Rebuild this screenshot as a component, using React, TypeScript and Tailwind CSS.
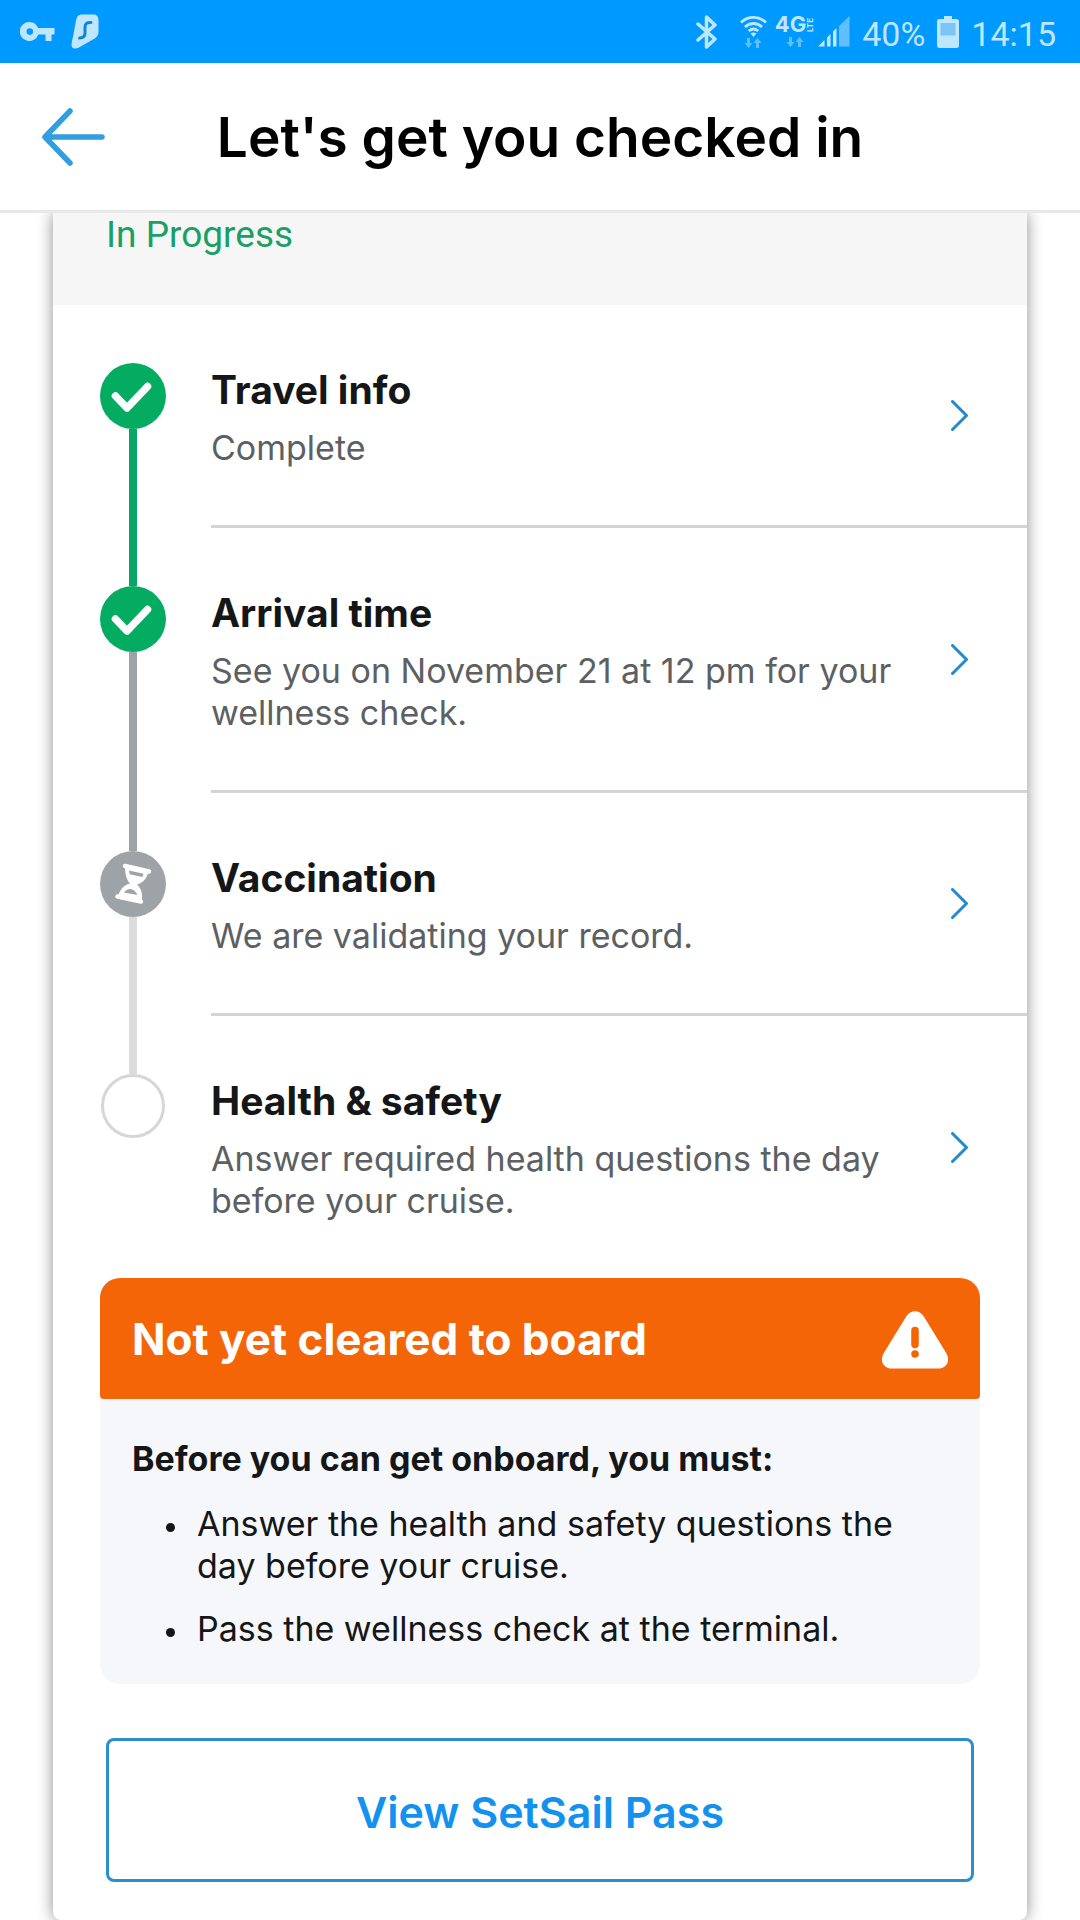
import type { ReactNode } from "react";

type Status = "done" | "pending" | "open";

type Step = {
  title: string;
  detail: string;
  status: Status;
  lineAbove: string;
  lineBelow: string;
};

const steps: Step[] = [
  {
    title: "Travel info",
    detail: "Complete",
    status: "done",
    lineAbove: "bg-transparent",
    lineBelow: "bg-[#08a666]",
  },
  {
    title: "Arrival time",
    detail: "See you on November 21 at 12 pm for your wellness check.",
    status: "done",
    lineAbove: "bg-[#08a666]",
    lineBelow: "bg-[#9ea3a8]",
  },
  {
    title: "Vaccination",
    detail: "We are validating your record.",
    status: "pending",
    lineAbove: "bg-[#9ea3a8]",
    lineBelow: "bg-[#dcdcdc]",
  },
  {
    title: "Health & safety",
    detail: "Answer required health questions the day before your cruise.",
    status: "open",
    lineAbove: "bg-[#dcdcdc]",
    lineBelow: "bg-transparent",
  },
];

const requirements = [
  "Answer the health and safety questions the day before your cruise.",
  "Pass the wellness check at the terminal.",
];

function DataArrows() {
  return (
    <svg width="18" height="10" viewBox="0 0 18 10" fill="currentColor" className="opacity-50" aria-hidden="true">
      <path d="M3 0h3v5h2.500L4.500 10 .5 5H3zM12 10h3V5h2.500L13.500 0 9.500 5H12z" />
    </svg>
  );
}

function StatusBar() {
  return (
    <div className="flex h-[63px] items-center justify-between bg-[#0099ff] pr-6 pl-5 text-[#bfe6ff]">
      <div className="flex items-center gap-4">
        <svg width="35" height="20" viewBox="0 0 35 20" aria-label="VPN key">
          <path
            fill="currentColor"
            fillRule="evenodd"
            d="M9.500 0a9.500 9.500 0 0 1 8.600 6H34.500v6.500H31.500V19H25.500v-6.500H18.300A9.500 9.500 0 1 1 9.500 0zm.3 6.300a3.300 3.300 0 1 0 0 6.600 3.300 3.300 0 0 0 0-6.600z"
          />
        </svg>
        <svg width="28" height="35" viewBox="0 0 28 35" aria-label="Surfshark">
          <path
            fill="currentColor"
            d="M11 .5h11c3.500 0 5.500 2 5.500 5.500v11.500c0 3-1.200 5.200-3.800 6.900L7.500 33.800C4 35.500.5 34.500.5 31c0-2 .8-5.500 1.700-9L5 6.500C5.800 2.500 7.500.5 11 .5z"
          />
          <path
            fill="none"
            stroke="#0c86d8"
            strokeWidth="3"
            strokeLinecap="round"
            d="M20 8.500c-4-.3-6 1.200-6 4.500v6c0 3.300-1.500 5-5.500 5"
          />
        </svg>
      </div>
      <div className="flex items-center gap-3">
        <div className="flex items-center">
          <svg width="22" height="34" viewBox="0 0 22 34" className="mr-[22px]" aria-label="Bluetooth">
            <path
              d="M2 9l17 15-8.500 8V2L19 10 2 25"
              fill="none"
              stroke="currentColor"
              strokeWidth="3.500"
              strokeLinejoin="round"
              strokeLinecap="round"
            />
          </svg>
          <div className="mr-2 flex flex-col items-center gap-px">
            <svg width="27" height="21" viewBox="0 0 27 21" aria-label="Wi-Fi">
              <g fill="none" stroke="currentColor" strokeWidth="2.800">
                <path d="M1 6.500C8-.3 19-.3 26 6.500" />
                <path d="M5 11c5-4.700 12-4.700 17 0" />
                <path d="M8.800 15c3-2.600 6.400-2.600 9.400 0" />
              </g>
              <path d="M10.500 17.500q3-2 6 0l-3 3.500z" fill="currentColor" />
            </svg>
            <DataArrows />
          </div>
          <div className="mr-1 flex flex-col items-center gap-1">
            <div className="flex h-[17px] items-center">
              <span className="font-[Inter,sans-serif] text-[22px] leading-[17px] font-bold">4G</span>
              <span className="rotate-180 font-[Inter,sans-serif] text-[8px] leading-[8px] font-bold [writing-mode:vertical-rl]">
                LTE
              </span>
            </div>
            <DataArrows />
          </div>
          <svg width="32" height="31" viewBox="0 0 32 31" aria-label="Signal strength">
            <g fill="currentColor">
              <path d="M0 30.500L6.500 24v6.500zM9 21.500l3.500-3.500v12.500H9zM15 15.500l3.500-3.500v18.500H15z" />
              <path d="M21 10L31.500 0v30.500H21z" opacity=".5" />
            </g>
          </svg>
        </div>
        <span className="pt-1 font-[Roboto,sans-serif] text-[34px] leading-none">40%</span>
        <svg width="22" height="32" viewBox="0 0 22 32" aria-label="Battery">
          <path
            fill="currentColor"
            d="M7 0h8v3h4.500Q22 3 22 5.500v24Q22 32 19.500 32h-17Q0 32 0 29.500v-24Q0 3 2.500 3H7z"
          />
          <path fill="#7cc4f5" d="M3.500 7h15v12.500h-15z" />
        </svg>
        <time className="pt-1 font-[Roboto,sans-serif] text-[34px] leading-none">14:15</time>
      </div>
    </div>
  );
}

function StepMarker({ status }: { status: Status }) {
  if (status === "open") {
    return <div className="mx-px size-16 shrink-0 rounded-full border-[3px] border-[#d6d6d6] bg-white" />;
  }
  if (status === "pending") {
    return (
      <svg width="66" height="66" viewBox="0 0 66 66" className="shrink-0" aria-label="In review">
        <circle cx="33" cy="33" r="33" fill="#9ea3a8" />
        <g fill="none" stroke="#fff" strokeWidth="4.500" strokeLinecap="round" strokeLinejoin="round">
          <path d="M25 15l24 5.500M17.500 45.500L41 50.500" />
        </g>
        <path
          fill="#fff"
          fillRule="evenodd"
          d="M25 15c0 8 1.500 13.500 5 17.500C23 34.500 19.500 39 18 46l23.500 4.500c1.500-6.500 0-13-4.500-17C43 32 47 27.500 48.500 20.500zM28.800 19.500L43.500 22.800l-1 3.200L29.800 23.200zM24 41.500c4-5.500 10.500-4.500 13.500 2.500z"
        />
      </svg>
    );
  }
  return (
    <svg width="66" height="66" viewBox="0 0 66 66" className="shrink-0" aria-label="Complete">
      <circle cx="33" cy="33" r="33" fill="#04ac62" />
      <path
        d="M15.500 33L27 45 47.500 23.500"
        fill="none"
        stroke="#fff"
        strokeWidth="7.500"
        strokeLinecap="round"
        strokeLinejoin="round"
      />
    </svg>
  );
}

function StepRow({ step, last }: { step: Step; last: boolean }) {
  return (
    <li>
      <a href="#" className="flex gap-[45px] pl-[47px]">
        <div className="flex flex-col items-center">
          <div className={`h-[58px] w-2 ${step.lineAbove}`} />
          <StepMarker status={step.status} />
          <div className={`w-2 flex-1 ${step.lineBelow}`} />
        </div>
        <div
          className={`flex flex-1 items-center gap-10 pr-[59px] ${last ? "" : "border-b-[3px] border-[#d4d4d4]"}`}
        >
          <div className="flex-1 pt-[61px] pb-14">
            <h2 className="text-[39px] leading-[48px] font-bold text-[#141617]">{step.title}</h2>
            <p className="mt-[13px] text-[34px] leading-[42px] text-[#5c6063]">{step.detail}</p>
          </div>
          <svg width="17" height="31" viewBox="0 0 17 31" className="shrink-0" aria-hidden="true">
            <path
              d="M1.500 1.500l14 14-14 14"
              fill="none"
              stroke="#1f8bd0"
              strokeWidth="3"
              strokeLinecap="round"
              strokeLinejoin="round"
            />
          </svg>
        </div>
      </a>
    </li>
  );
}

function Bullet({ children }: { children: ReactNode }) {
  return (
    <li className="flex gap-[22px] pl-[34px]">
      <span className="mt-5 size-[9px] shrink-0 rounded-full bg-[#141617]" />
      <span>{children}</span>
    </li>
  );
}

function BoardingNotice() {
  return (
    <section className="mx-[47px] rounded-[20px] bg-[#f6f7fb]">
      <div className="flex items-center justify-between rounded-t-[20px] rounded-b-[4px] bg-[#f46508] px-8 pt-[35px] pb-[33px]">
        <h2 className="text-[44px] leading-[53px] font-bold text-white">Not yet cleared to board</h2>
        <svg width="66" height="58" viewBox="0 0 66 58" className="-my-1 shrink-0" aria-label="Warning">
          <path
            fill="#fff"
            d="M24.500 5C28.500-1.500 37.500-1.500 41.500 5L64.500 42.500C68.500 50 64.500 57.500 56 57.500H10C1.500 57.500-2.500 50 1.500 42.500z"
          />
          <path d="M33 19.500v14" stroke="#f46508" strokeWidth="7.500" strokeLinecap="round" />
          <circle cx="33" cy="43" r="3.750" fill="#f46508" />
        </svg>
      </div>
      <div className="px-8 pt-[39px] pb-[34px] text-[34px] leading-[42px] text-[#141617]">
        <h3 className="font-bold">Before you can get onboard, you must:</h3>
        <ul className="mt-[23px] flex flex-col gap-[21px]">
          {requirements.map((text) => (
            <Bullet key={text}>{text}</Bullet>
          ))}
        </ul>
      </div>
    </section>
  );
}

export default function App() {
  return (
    <div className="min-h-screen overflow-hidden bg-white font-[Inter,sans-serif]">
      <div className="relative z-10">
        <StatusBar />
        <header className="grid h-[150px] grid-cols-[1fr_auto_1fr] items-center border-b-[3px] border-[#e8e8e8] bg-white px-[42px]">
          <button type="button" aria-label="Back" className="justify-self-start">
            <svg width="63" height="58" viewBox="0 0 63 58" className="block">
              <path
                d="M28 3L3 29l25 26M3 29h57"
                fill="none"
                stroke="#2f9fe0"
                strokeWidth="5.500"
                strokeLinecap="round"
                strokeLinejoin="round"
              />
            </svg>
          </button>
          <h1 className="text-[55px] leading-[66px] font-semibold text-black">Let's get you checked in</h1>
        </header>
      </div>
      <main className="mx-[53px] rounded-b-lg bg-white pb-[38px] shadow-[0_0_16px_rgba(0,0,0,0.45)]">
        <div className="bg-[#f6f6f6] px-[53px] pb-12 font-[Roboto,sans-serif] text-[37px] leading-[44px] text-[#1a9f66]">
          In Progress
        </div>
        <ul>
          {steps.map((step, i) => (
            <StepRow key={step.title} step={step} last={i === steps.length - 1} />
          ))}
        </ul>
        <BoardingNotice />
        <div className="mt-[54px] px-[53px]">
          <button
            type="button"
            className="h-36 w-full rounded-lg border-[3px] border-[#2b8fcd] pt-1 text-[43px] leading-[52px] font-semibold text-[#1391ee]"
          >
            View SetSail Pass
          </button>
        </div>
      </main>
    </div>
  );
}
